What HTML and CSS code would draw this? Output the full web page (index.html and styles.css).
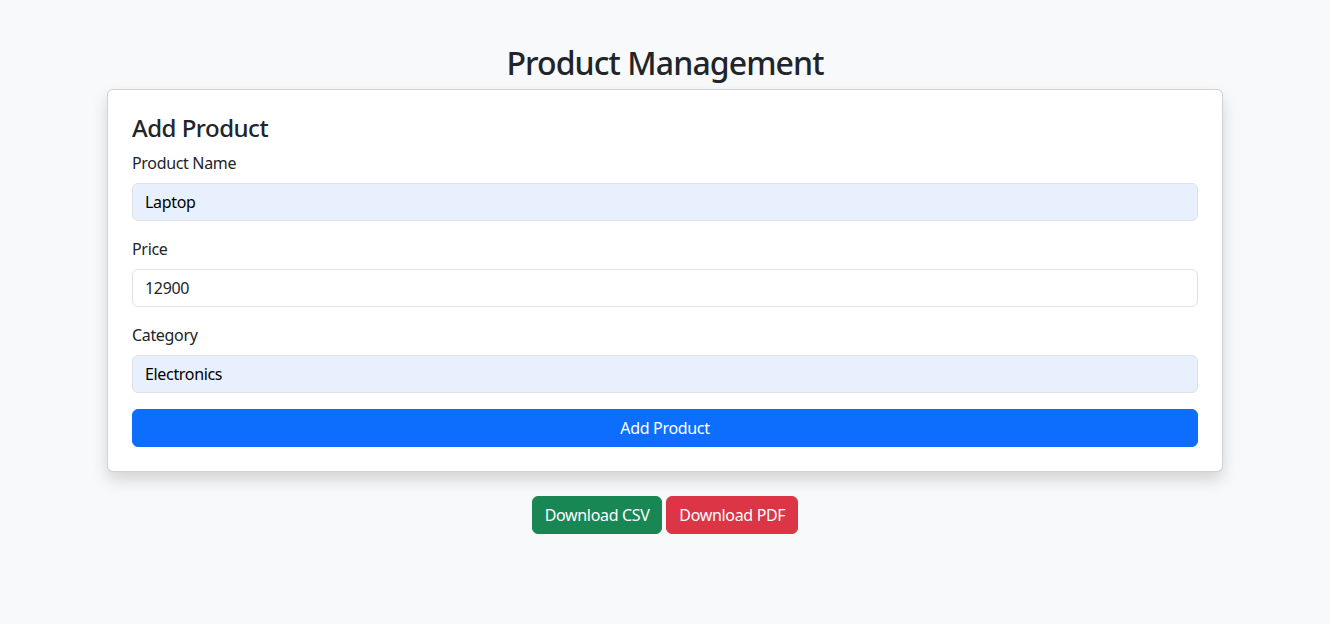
FILE: index.html
```html
<!DOCTYPE html>
<html lang="en">
<head>
<meta charset="utf-8">
<title>Product Management</title>
<link rel="stylesheet" href="styles.css">
</head>
<body>
<div class="container">
  <h2 class="page-title">Product Management</h2>
  <div class="card">
    <h4 class="card-title">Add Product</h4>
    <form class="form">
      <div class="field">
        <label class="form-label" for="name">Product Name</label>
        <input class="form-control autofill" id="name" type="text" value="Laptop">
      </div>
      <div class="field">
        <label class="form-label" for="price">Price</label>
        <input class="form-control" id="price" type="text" value="12900">
      </div>
      <div class="field">
        <label class="form-label" for="category">Category</label>
        <input class="form-control autofill" id="category" type="text" value="Electronics">
      </div>
      <button class="btn btn-primary btn-block" type="button">Add Product</button>
    </form>
  </div>
  <div class="downloads">
    <button class="btn btn-success" type="button">Download CSV</button>
    <button class="btn btn-danger" type="button">Download PDF</button>
  </div>
</div>
</body>
</html>
```
FILE: styles.css
```css
* { box-sizing: border-box; }
html, body { margin: 0; }
body {
  background: #f8f9fa;
  color: #212529;
  font-family: "Noto Sans", "Open Sans", sans-serif;
  font-size: 16px;
  line-height: 1.5;
  letter-spacing: -0.33px;
}
.container {
  max-width: 1140px;
  margin: 0 auto;
  padding: 44px 12px 0;
}
.page-title {
  margin: 0 0 7px;
  text-align: center;
  font-size: 32px;
  font-weight: 500;
  line-height: 1.2;
  letter-spacing: -0.9px;
}
.card {
  background: #fff;
  border: 1px solid rgba(0,0,0,.175);
  border-radius: 6px;
  box-shadow: 0 8px 16px rgba(0,0,0,.15);
  padding: 24px;
}
.card-title {
  margin: 0 0 8px;
  font-size: 24px;
  font-weight: 500;
  line-height: 1.2;
  letter-spacing: -0.5px;
}
.form { margin: 0; }
.field { margin-bottom: 16px; }
.form-label {
  display: block;
  margin-bottom: 8px;
}
.form-control {
  display: block;
  width: 100%;
  padding: 6px 12px;
  font: inherit;
  line-height: 1.5;
  letter-spacing: inherit;
  color: #212529;
  background: #fff;
  border: 1px solid #dee2e6;
  border-radius: 6px;
}
.form-control.autofill { background: #e8f0fe; color: #000; }
.btn {
  display: inline-block;
  padding: 6px 12px;
  font: inherit;
  line-height: 1.5;
  letter-spacing: inherit;
  color: #fff;
  border: 1px solid transparent;
  border-radius: 6px;
  cursor: pointer;
}
.btn-block { display: block; width: 100%; }
.btn-primary { background: #0d6efd; border-color: #0d6efd; }
.btn-success { background: #198754; border-color: #198754; }
.btn-danger { background: #dc3545; border-color: #dc3545; }
.downloads { margin-top: 24px; text-align: center; }
```
